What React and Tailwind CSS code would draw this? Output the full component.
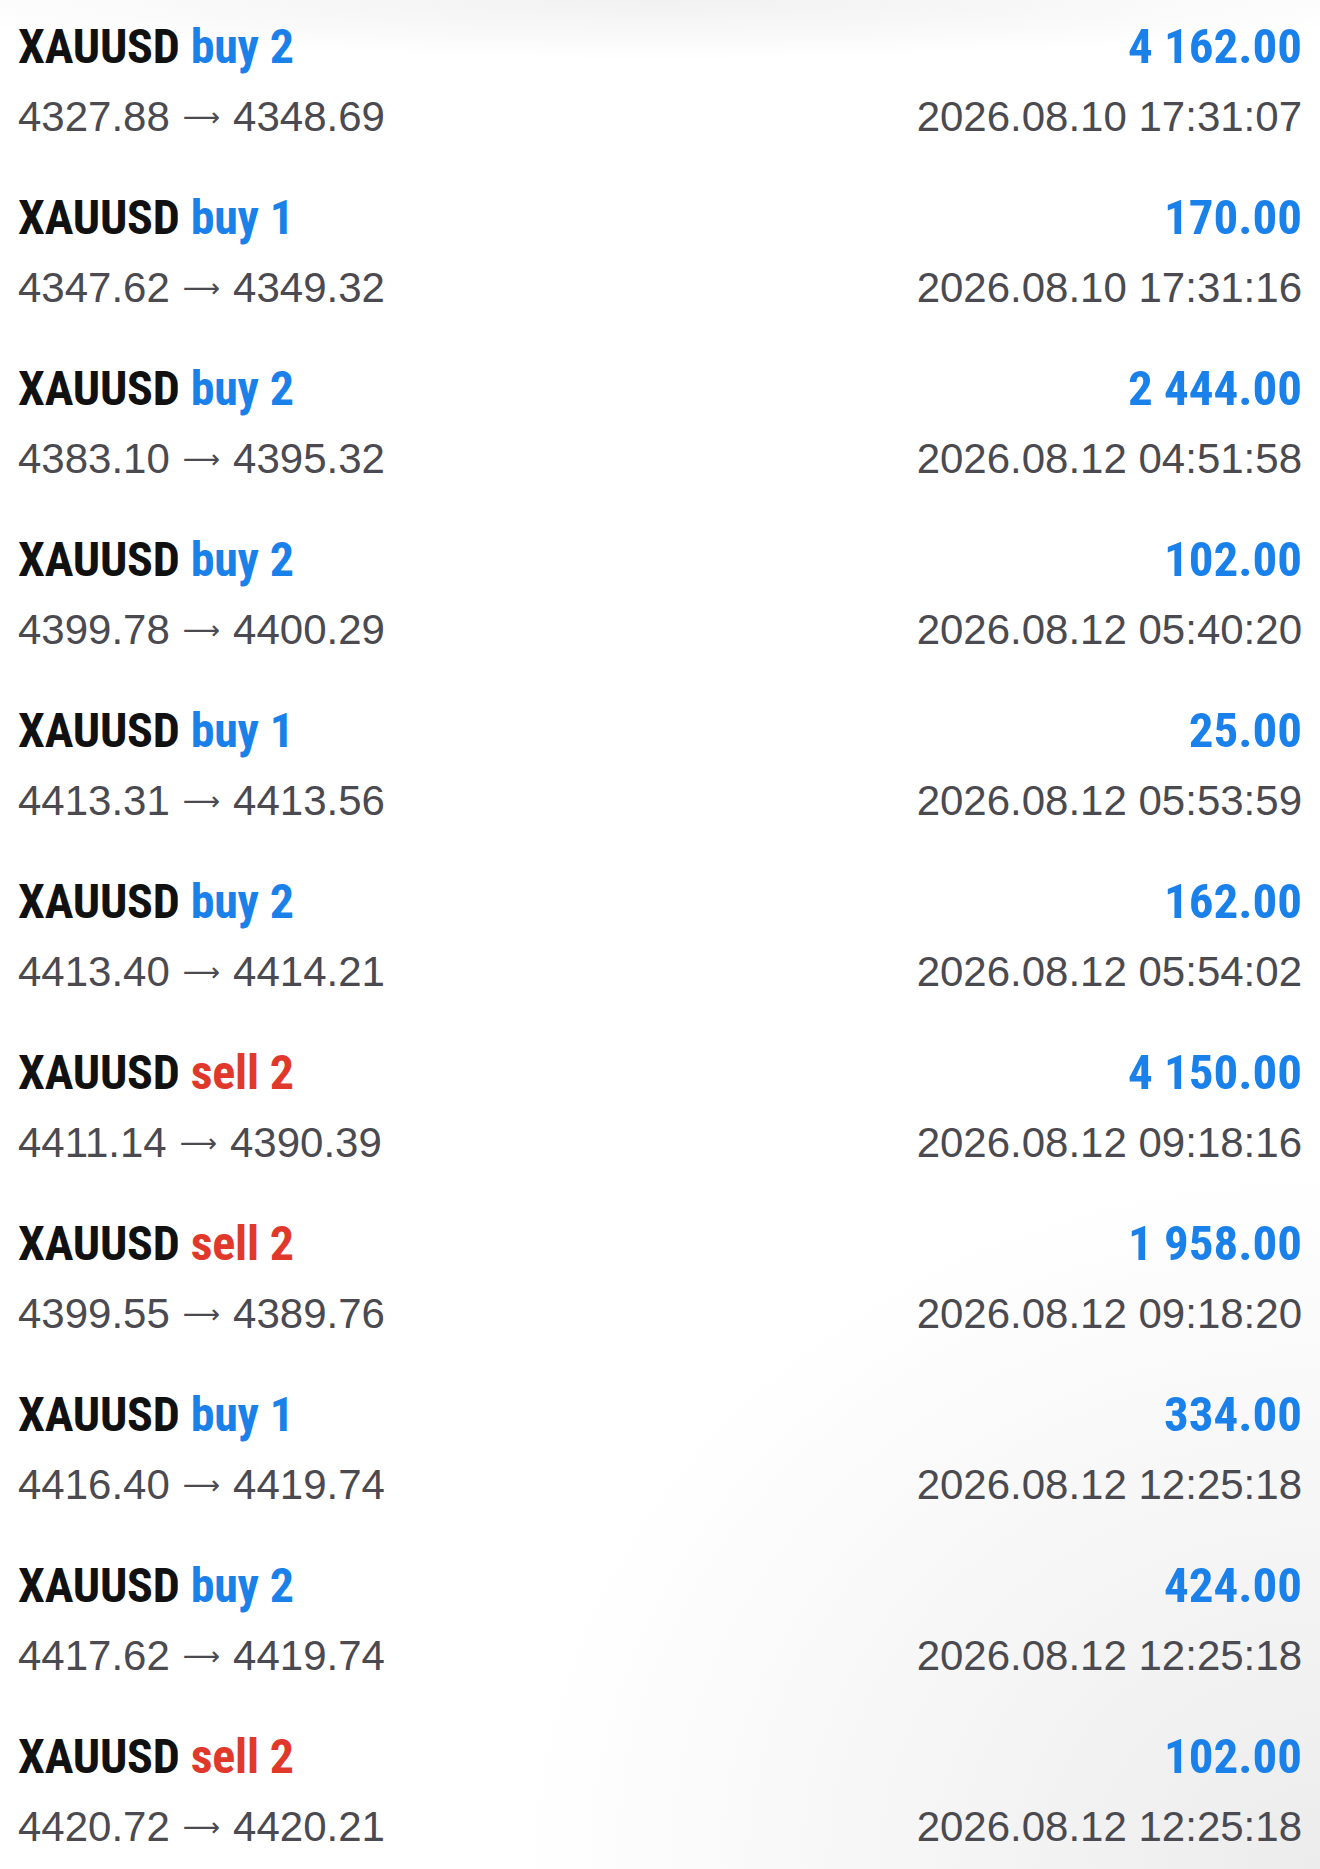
import React from "react";

const rows = [
  ["buy 2", "4327.88", "4348.69", "4 162.00", "2026.08.10 17:31:07"],
  ["buy 1", "4347.62", "4349.32", "170.00", "2026.08.10 17:31:16"],
  ["buy 2", "4383.10", "4395.32", "2 444.00", "2026.08.12 04:51:58"],
  ["buy 2", "4399.78", "4400.29", "102.00", "2026.08.12 05:40:20"],
  ["buy 1", "4413.31", "4413.56", "25.00", "2026.08.12 05:53:59"],
  ["buy 2", "4413.40", "4414.21", "162.00", "2026.08.12 05:54:02"],
  ["sell 2", "4411.14", "4390.39", "4 150.00", "2026.08.12 09:18:16"],
  ["sell 2", "4399.55", "4389.76", "1 958.00", "2026.08.12 09:18:20"],
  ["buy 1", "4416.40", "4419.74", "334.00", "2026.08.12 12:25:18"],
  ["buy 2", "4417.62", "4419.74", "424.00", "2026.08.12 12:25:18"],
  ["sell 2", "4420.72", "4420.21", "102.00", "2026.08.12 12:25:18"],
];

const cond = { fontFamily: '"Roboto Condensed", Roboto, sans-serif', fontStretch: "condensed" };

export default function App() {
  return (
    <div className="relative w-[1320px] h-[1869px] overflow-hidden bg-white">
      <div className="pointer-events-none absolute inset-x-0 top-0 h-[60px] bg-[radial-gradient(ellipse_60%_100%_at_50%_0%,#f1f1f1,rgba(255,255,255,0))]" />
      <div className="pointer-events-none absolute right-0 bottom-0 w-[800px] h-[700px] bg-[radial-gradient(ellipse_100%_100%_at_100%_100%,#ececec,rgba(255,255,255,0))]" />
      <div className="relative flex flex-col px-[18px]">
        {rows.map((r, i) => {
          const sell = r[0].startsWith("sell");
          return (
            <div key={i} className="flex h-[171px] shrink-0 justify-between pt-[19px]">
              <div className="flex flex-col">
                <div className="h-[56px] text-[48px] leading-[56px] font-bold tracking-[-0.2px] whitespace-nowrap" style={cond}>
                  <span className="text-[#111111]">XAUUSD</span>{" "}
                  <span className={sell ? "text-[#e0392b]" : "text-[#1a80ea]"}>{r[0]}</span>
                </div>
                <div className="mt-[18px] flex h-[48px] items-center text-[42px] leading-[48px] text-[#4a4a50] font-['Liberation_Sans',sans-serif] whitespace-nowrap">
                  <span>{r[1]}</span>
                  <span className="mx-[13px] font-['DejaVu_Sans',sans-serif] text-[26px] leading-[48px]">⟶</span>
                  <span>{r[2]}</span>
                </div>
              </div>
              <div className="flex flex-col items-end">
                <div className="h-[56px] text-[49px] leading-[56px] font-bold text-[#1a80ea] whitespace-nowrap" style={cond}>
                  {r[3]}
                </div>
                <div className="mt-[18px] h-[48px] text-[42px] leading-[48px] text-[#4a4a50] font-['Liberation_Sans',sans-serif] whitespace-nowrap">
                  {r[4]}
                </div>
              </div>
            </div>
          );
        })}
      </div>
    </div>
  );
}
